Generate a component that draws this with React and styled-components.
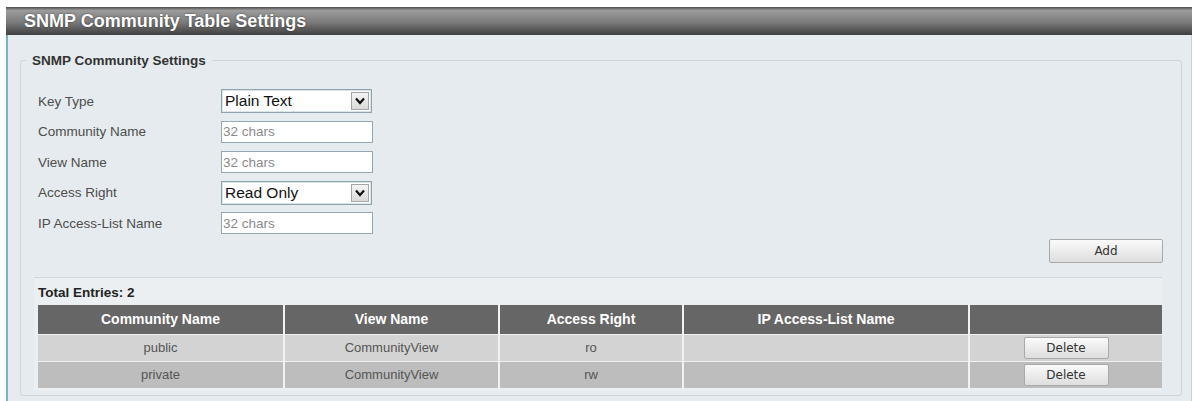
import React from "react";
import styled, { createGlobalStyle } from "styled-components";

const GlobalStyle = createGlobalStyle`
  html, body {
    margin: 0;
    padding: 0;
    background: #ffffff;
    font-family: "Liberation Sans", Arial, sans-serif;
  }
`;

const Page = styled.div`
  padding: 7px 3px 0 6px;
  height: 401px;
  box-sizing: border-box;
  overflow: hidden;
`;

const TitleBar = styled.div`
  height: 28px;
  display: flex;
  align-items: center;
  padding-left: 18px;
  background: linear-gradient(#4a4a4a 0, #9c9c9c 12%, #7a7a7a 55%, #3f3f3f 100%);
  color: #ffffff;
  font-size: 18px;
  font-weight: bold;
  text-shadow: 0 0 2px rgba(0, 0, 0, 0.6);
`;

const Panel = styled.div`
  background: #e5ebee;
  border-left: 2px solid #7fb0bb;
  border-right: 1px solid #c4d2d8;
  padding: 18px 9px 8px 12px;
  height: 400px;
`;

const Fieldset = styled.fieldset`
  margin: 0;
  border: 1px solid #cbd5da;
  border-radius: 3px;
  padding: 18px 18px 4px 13px;
`;

const Legend = styled.legend`
  font-size: 13.5px;
  font-weight: bold;
  color: #333;
  padding: 0 6px;
  margin-left: -8px;
`;

const FormGrid = styled.div`
  display: grid;
  grid-template-columns: 183px 154px;
  grid-auto-rows: 30.5px;
  align-items: center;
  padding-left: 4px;
`;

const Label = styled.span`
  font-size: 13.5px;
  color: #4d4d4d;
`;

const SelectBox = styled.div`
  display: flex;
  align-items: center;
  height: 24px;
  width: 151px;
  box-sizing: border-box;
  background: #ffffff;
  border: 1px solid #8ea4ad;
  box-shadow: inset 0 0 0 1px #dbe4e8;
`;

const SelectText = styled.span`
  flex: 1;
  font-size: 15.5px;
  color: #111;
  padding-left: 3px;
`;

const Arrow = styled.span`
  width: 18px;
  height: 18px;
  margin-right: 2px;
  display: flex;
  align-items: center;
  justify-content: center;
  background: linear-gradient(#f4f4f4, #dadada);
  border: 1px solid #a6a6a6;
  box-sizing: border-box;
`;

const TextInput = styled.input`
  width: 152px;
  height: 22px;
  box-sizing: border-box;
  border: 1px solid #93a9b2;
  background: #ffffff;
  padding: 0 1px;
  font-family: "Liberation Sans", Arial, sans-serif;
  font-size: 13.5px;
  color: #333;
  &::placeholder {
    color: #8a8a8a;
  }
`;

const ButtonRow = styled.div`
  display: flex;
  justify-content: flex-end;
  margin-bottom: 14px;
`;

const Button = styled.button`
  width: ${p => p.$w}px;
  height: ${p => p.$h}px;
  border: 1px solid #a9a9a9;
  border-radius: 2px;
  background: linear-gradient(#fafafa, #dedede);
  font-family: "DejaVu Sans", Verdana, sans-serif;
  font-size: 12px;
  color: #333;
  padding: 0;
  cursor: pointer;
`;

const EntriesBox = styled.div`
  background: #ebeff1;
  border-top: 1px solid #d0d9dd;
  padding: 7px 0 3px 4px;
  margin-right: 1px;
`;

const Total = styled.div`
  font-size: 13.5px;
  font-weight: bold;
  color: #222;
  margin-bottom: 5px;
`;

const Table = styled.table`
  width: 100%;
  border-collapse: collapse;
  table-layout: fixed;
`;

const Th = styled.th`
  background: #666666;
  color: #ffffff;
  font-size: 14px;
  font-weight: bold;
  height: 29px;
  padding: 0;
  border-right: 2px solid #f2f2f2;
  &:last-child {
    border-right: none;
  }
`;

const Td = styled.td`
  background: ${p => (p.$alt ? "#bdbdbd" : "#d3d3d3")};
  color: #555;
  font-size: 13px;
  text-align: center;
  height: 26px;
  padding: 0;
  border-right: 2px solid #f2f2f2;
  border-top: 1px solid #f2f2f2;
  &:last-child {
    border-right: none;
  }
`;

const Chevron = () => (
  <svg width="12" height="10" viewBox="0 0 12 10">
    <path d="M2 2.5 L6 7 L10 2.5" fill="none" stroke="#111" strokeWidth="2.2" />
  </svg>
);

const rows = [
  { name: "public", view: "CommunityView", right: "ro", acl: "" },
  { name: "private", view: "CommunityView", right: "rw", acl: "" },
];

export default function App() {
  return (
    <Page>
      <GlobalStyle />
      <TitleBar>SNMP Community Table Settings</TitleBar>
      <Panel>
        <Fieldset>
          <Legend>SNMP Community Settings</Legend>
          <FormGrid>
            <Label>Key Type</Label>
            <SelectBox>
              <SelectText>Plain Text</SelectText>
              <Arrow><Chevron /></Arrow>
            </SelectBox>
            <Label>Community Name</Label>
            <TextInput placeholder="32 chars" />
            <Label>View Name</Label>
            <TextInput placeholder="32 chars" />
            <Label>Access Right</Label>
            <SelectBox>
              <SelectText>Read Only</SelectText>
              <Arrow><Chevron /></Arrow>
            </SelectBox>
            <Label>IP Access-List Name</Label>
            <TextInput placeholder="32 chars" />
          </FormGrid>
          <ButtonRow>
            <Button $w={114} $h={24}>Add</Button>
          </ButtonRow>
          <EntriesBox>
            <Total>Total Entries: 2</Total>
            <Table>
              <colgroup>
                <col style={{ width: 246 }} />
                <col style={{ width: 215 }} />
                <col style={{ width: 184 }} />
                <col style={{ width: 286 }} />
                <col />
              </colgroup>
              <thead>
                <tr>
                  <Th>Community Name</Th>
                  <Th>View Name</Th>
                  <Th>Access Right</Th>
                  <Th>IP Access-List Name</Th>
                  <Th></Th>
                </tr>
              </thead>
              <tbody>
                {rows.map((r, i) => (
                  <tr key={r.name}>
                    <Td $alt={i % 2 === 1}>{r.name}</Td>
                    <Td $alt={i % 2 === 1}>{r.view}</Td>
                    <Td $alt={i % 2 === 1}>{r.right}</Td>
                    <Td $alt={i % 2 === 1}>{r.acl}</Td>
                    <Td $alt={i % 2 === 1}>
                      <Button $w={85} $h={22}>Delete</Button>
                    </Td>
                  </tr>
                ))}
              </tbody>
            </Table>
          </EntriesBox>
        </Fieldset>
      </Panel>
    </Page>
  );
}
